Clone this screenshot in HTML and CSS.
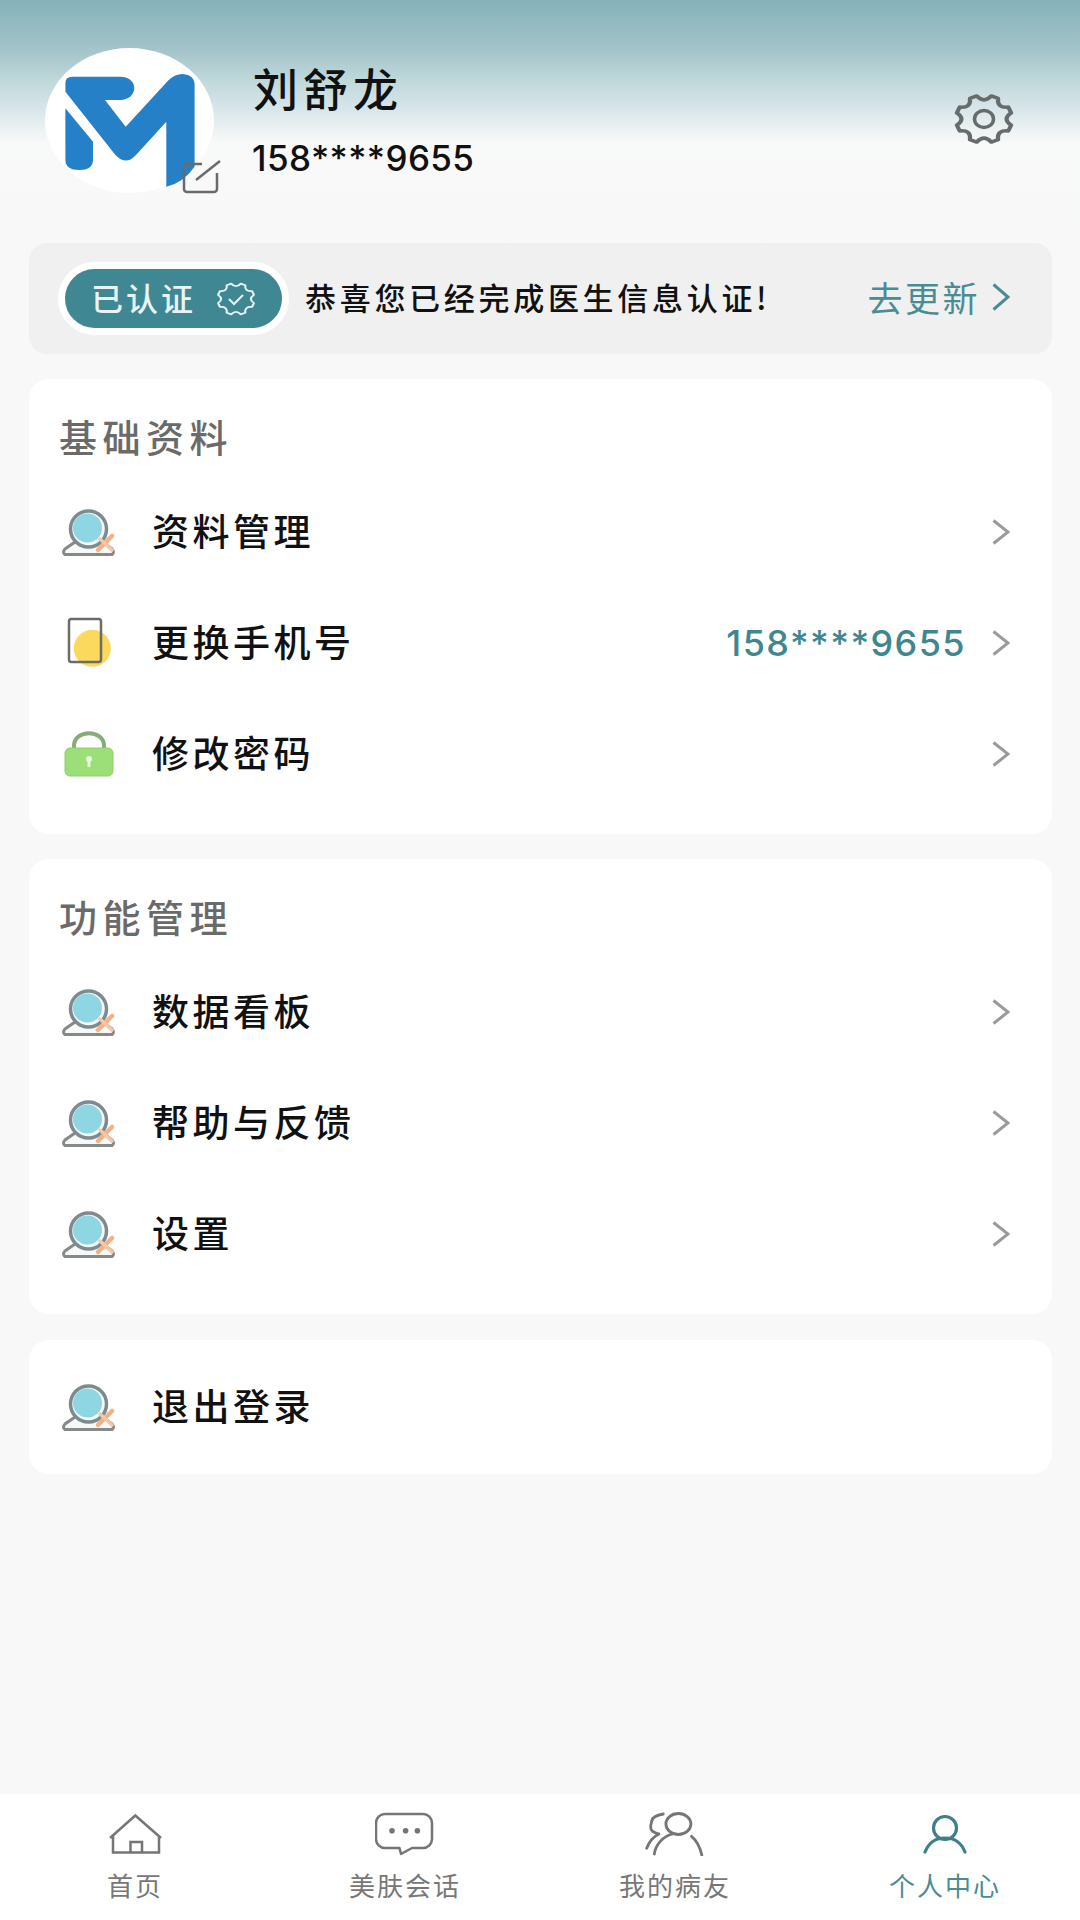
FILE: index.html
```html
<!DOCTYPE html>
<html lang="zh-CN">
<head>
<meta charset="utf-8">
<title>个人中心</title>
<link rel="stylesheet" href="styles.css">
</head>
<body>
<svg class="defs" width="0" height="0" aria-hidden="true">
  <symbol id="person" viewBox="0 0 54 54">
    <path d="M13 37 L3 44 Q0 47 3 49.500 H50 Q53 47 50 44 L42 38" fill="#f7f8f8" stroke="#85898a" stroke-width="3"/>
    <circle cx="26.500" cy="24" r="18" fill="#f2fafb" stroke="#7f8a8e" stroke-width="3.500"/>
    <circle cx="25.500" cy="23" r="14.500" fill="#8ed6e2"/>
    <path d="M36 45 L50 31" stroke="#f3b184" stroke-width="4.500" stroke-linecap="round"/>
    <path d="M38 34 L50 45" stroke="#f6c8a5" stroke-width="3.500" stroke-linecap="round"/>
  </symbol>
  <symbol id="chev" viewBox="0 0 18 26">
    <path d="M1.500 1.500 L16 13 L1.500 24.500" fill="none" stroke="#9a9a9a" stroke-width="3"/>
  </symbol>
</svg>

<div class="page">
  <header class="hero">
    <div class="avatar">
      <svg class="logo" viewBox="0 0 169 145">
        <path fill="#2680c8" d="M20.400 35 Q20.400 28.700 27.300 28.700 H75.500 C83 28.700 89.300 33 89.300 40 C89.300 47 83 52 75.500 52 H60 L80.700 78.700 L123.700 32 Q130 26 137.500 26 Q149.600 27 149.600 37 V118.700 Q138 135 121.300 138.700 V73.700 L91 107 Q81 118 70.400 107 L20.400 43.700 Z"/>
        <path fill="#2680c8" d="M20.400 60.300 L48 93.700 V112 Q48 122 34.200 122 Q20.400 122 20.400 112 Z"/>
      </svg>
      <svg class="edit" viewBox="0 0 40 36">
        <path d="M20 4 H5 a3 3 0 0 0 -3 3 V29 a3 3 0 0 0 3 3 H32 a3 3 0 0 0 3 -3 V13" fill="none" stroke="#6a6a6a" stroke-width="2.500"/>
        <path d="M14 20 L38 1" stroke="#6a6a6a" stroke-width="2.500"/>
      </svg>
    </div>
    <div class="info">
      <div class="name">刘舒龙</div>
      <div class="phone">158****9655</div>
    </div>
    <svg class="gear" viewBox="0 0 60 52">
      <g transform="translate(30 26) scale(1.060 0.900)">
        <path d="M25.600 6.860 L22.950 13.250 Q12 12 13.250 22.950 L6.860 25.600 Q0 17 -6.860 25.600 L-13.250 22.950 Q-12 12 -22.950 13.250 L-25.600 6.860 Q-17 0 -25.600 -6.860 L-22.950 -13.250 Q-12 -12 -13.250 -22.950 L-6.860 -25.600 Q0 -17 6.860 -25.600 L13.250 -22.950 Q12 -12 22.950 -13.250 L25.600 -6.860 Q17 0 25.600 6.860Z" fill="none" stroke="#666b6c" stroke-width="4" stroke-linejoin="round"/>
      </g>
      <ellipse cx="30" cy="26" rx="9.500" ry="8.500" fill="none" stroke="#666b6c" stroke-width="3.500"/>
    </svg>
  </header>

  <main class="content">
    <section class="notice">
      <div class="pill">
        <span class="pill-text">已认证</span>
        <svg class="pill-icon" viewBox="0 0 40 34">
          <g transform="translate(20 17) scale(0.700 0.600)">
            <path d="M25.600 6.860 L22.950 13.250 Q12 12 13.250 22.950 L6.860 25.600 Q0 17 -6.860 25.600 L-13.250 22.950 Q-12 12 -22.950 13.250 L-25.600 6.860 Q-17 0 -25.600 -6.860 L-22.950 -13.250 Q-12 -12 -13.250 -22.950 L-6.860 -25.600 Q0 -17 6.860 -25.600 L13.250 -22.950 Q12 -12 22.950 -13.250 L25.600 -6.860 Q17 0 25.600 6.860Z" fill="none" stroke="#e8f4f4" stroke-width="3" stroke-linejoin="round"/>
          </g>
          <path d="M13 17 L18 22 L27 13" fill="none" stroke="#e8f4f4" stroke-width="2"/>
        </svg>
      </div>
      <p class="notice-text">恭喜您已经完成医生信息认证!</p>
      <a class="update">去更新
        <svg class="update-chev" viewBox="0 0 18 28"><path d="M1.500 1.500 L16 14 L1.500 26.500" fill="none" stroke="#4a8c94" stroke-width="3"/></svg>
      </a>
    </section>

    <section class="card">
      <h2 class="card-title">基础资料</h2>
      <div class="row">
        <svg class="row-icon"><use href="#person"/></svg>
        <span class="row-label">资料管理</span>
        <svg class="chev"><use href="#chev"/></svg>
      </div>
      <div class="row">
        <svg class="row-icon" viewBox="0 0 54 54">
          <rect x="7" y="3" width="32" height="43" rx="2" fill="#fff"/>
          <circle cx="30.300" cy="32.300" r="18.500" fill="#fbd95c"/>
          <rect x="7" y="3" width="32" height="43" rx="2.500" fill="none" stroke="#6b6b68" stroke-width="2.500"/>
        </svg>
        <span class="row-label">更换手机号</span>
        <span class="row-value">158****9655</span>
        <svg class="chev"><use href="#chev"/></svg>
      </div>
      <div class="row">
        <svg class="row-icon" viewBox="0 0 54 54">
          <path d="M12 24 V19 C12 2 42 2 42 19 V24" fill="none" stroke="#86ad78" stroke-width="4"/>
          <rect x="3" y="21" width="48" height="28" rx="5" fill="#9cdf79" stroke="#8bd068" stroke-width="1"/>
          <circle cx="27" cy="32" r="3" fill="#e6f7dc"/>
          <path d="M27 33 V40" stroke="#e6f7dc" stroke-width="3"/>
        </svg>
        <span class="row-label">修改密码</span>
        <svg class="chev"><use href="#chev"/></svg>
      </div>
    </section>

    <section class="card">
      <h2 class="card-title">功能管理</h2>
      <div class="row">
        <svg class="row-icon"><use href="#person"/></svg>
        <span class="row-label">数据看板</span>
        <svg class="chev"><use href="#chev"/></svg>
      </div>
      <div class="row">
        <svg class="row-icon"><use href="#person"/></svg>
        <span class="row-label">帮助与反馈</span>
        <svg class="chev"><use href="#chev"/></svg>
      </div>
      <div class="row">
        <svg class="row-icon"><use href="#person"/></svg>
        <span class="row-label">设置</span>
        <svg class="chev"><use href="#chev"/></svg>
      </div>
    </section>

    <section class="card card-single">
      <div class="row">
        <svg class="row-icon"><use href="#person"/></svg>
        <span class="row-label">退出登录</span>
      </div>
    </section>
  </main>

  <nav class="tabbar">
    <div class="tab">
      <svg class="tab-icon" viewBox="0 0 60 44">
        <path d="M5 26 L30.300 3.500 L56 26 M8 24 V40.500 H54 V24 M25.500 40.500 V30 H37 V40.500" fill="none" stroke="#757575" stroke-width="2.500"/>
      </svg>
      <span class="tab-label">首页</span>
    </div>
    <div class="tab">
      <svg class="tab-icon" viewBox="0 0 60 44">
        <path d="M10 2 H48 a9 9 0 0 1 9 9 V27 a9 9 0 0 1 -9 9 H37 L26 42 L24.500 36 H10 a9 9 0 0 1 -9 -9 V11 a9 9 0 0 1 9 -9Z" fill="none" stroke="#757575" stroke-width="2.500" stroke-linejoin="round"/>
        <circle cx="17" cy="18.700" r="2.800" fill="#757575"/>
        <circle cx="30.600" cy="18.700" r="2.800" fill="#757575"/>
        <circle cx="42.400" cy="18.700" r="2.800" fill="#757575"/>
      </svg>
      <span class="tab-label">美肤会话</span>
    </div>
    <div class="tab">
      <svg class="tab-icon" viewBox="0 0 60 44">
        <g fill="none" stroke="#757575" stroke-width="2.800" stroke-linecap="round">
          <ellipse cx="33.400" cy="12" rx="12.500" ry="10.500"/>
          <path d="M9.300 42 C10.500 33 18 24 27.600 22"/>
          <path d="M46.500 24.300 C51 28 55 35 56.800 43"/>
          <path d="M18.300 2 C12 3 7.500 5 6.900 8.700 C6 12 5 14 5.900 17 C7 20 10 21 13.800 22"/>
          <path d="M1.700 36.300 C4 30 8 25 13.800 22"/>
        </g>
      </svg>
      <span class="tab-label">我的病友</span>
    </div>
    <div class="tab tab-active">
      <svg class="tab-icon" viewBox="0 0 60 44">
        <g fill="none" stroke="#3f8088" stroke-width="3.200" stroke-linecap="round">
          <circle cx="30" cy="16" r="11.500"/>
          <path d="M10 40 C14 30 22 26 30 26 C38 26 46 30 50 40"/>
        </g>
      </svg>
      <span class="tab-label">个人中心</span>
    </div>
  </nav>
</div>
</body>
</html>
```

FILE: styles.css
```css
* { box-sizing: border-box; }
html, body { margin: 0; padding: 0; }
body {
  width: 1080px;
  height: 1920px;
  background: #f8f8f8;
  font-family: "Noto Sans CJK SC", "Noto Sans", sans-serif;
  color: #111;
  overflow: hidden;
}
.defs { position: absolute; }
.page {
  width: 1080px;
  height: 1920px;
  display: flex;
  flex-direction: column;
}
.hero {
  height: 243px;
  padding: 48px 66px 50px 45px;
  display: flex;
  align-items: center;
  background: linear-gradient(180deg, #86b1ba 0, #a3c4ca 50px, #c0d8da 80px, #d8e6ea 110px, #f0f4f4 133px, #f8f9f9 143px, #f8f8f8 243px);
}
.avatar {
  position: relative;
  width: 169px;
  height: 145px;
  border-radius: 50%;
  background: #fff;
  flex: none;
}
.logo { display: block; width: 169px; height: 145px; filter: blur(0.4px); }
.edit { position: absolute; left: 137px; top: 112px; width: 40px; height: 36px; }
.info {
  margin-left: 39px;
  flex: 1;
  display: flex;
  flex-direction: column;
  gap: 22px;
  padding-bottom: 2px;
}
.name {
  font-size: 45px;
  line-height: 54px;
  font-weight: 500;
  letter-spacing: 5px;
  color: #111;
}
.phone {
  font-family: Inter, "Noto Sans", sans-serif;
  font-size: 35px;
  line-height: 42px;
  font-weight: 500;
  letter-spacing: 0.4px;
  color: #111;
  margin-left: -1px;
}
.gear { width: 60px; height: 52px; flex: none; margin-bottom: 4px; filter: blur(0.3px); }
.content {
  flex: 1;
  padding: 0 28px 0 29px;
  display: flex;
  flex-direction: column;
  gap: 25.200px;
}
.notice {
  height: 111px;
  background: #f0f0f0;
  border-radius: 18px;
  display: flex;
  align-items: center;
  padding: 0 42px 0 29px;
}
.pill {
  width: 231px;
  height: 73px;
  background: #3f8793;
  border: 7px solid #fff;
  border-radius: 37px;
  display: flex;
  align-items: center;
  padding-left: 26px;
  flex: none;
}
.pill-text {
  font-size: 32px;
  line-height: 40px;
  letter-spacing: 3px;
  font-weight: 500;
  color: #e8f4f4;
  padding-bottom: 4px;
  height: 44px;
}
.pill-icon { width: 40px; height: 34px; margin-left: 20px; }
.notice-text {
  margin: 0 0 0 16px;
  flex: 1;
  font-size: 31px;
  line-height: 40px;
  letter-spacing: 3.700px;
  font-weight: 500;
  color: #111;
  white-space: nowrap;
  padding-bottom: 4px;
}
.update {
  display: flex;
  align-items: center;
  font-size: 35px;
  line-height: 44px;
  letter-spacing: 2.500px;
  color: #4a8c94;
  white-space: nowrap;
  padding-bottom: 4px;
}
.update-chev { width: 18px; height: 28px; margin-left: 12px; }
.card {
  background: #fff;
  border-radius: 20px;
  padding: 37px 0 25px;
}
.card-single { padding: 11.500px 0; }
.card-title {
  margin: 0 0 12px;
  padding: 0 0 0 30px;
  height: 48px;
  font-size: 38px;
  line-height: 40px;
  font-weight: 500;
  letter-spacing: 5.500px;
  color: #6a6a6a;
}
.row {
  height: 111px;
  display: flex;
  align-items: center;
  padding: 0 42px 0 33px;
}
.row-icon { width: 54px; height: 54px; flex: none; filter: blur(0.7px); }
.row-label {
  margin-left: 36px;
  flex: 1;
  font-size: 37px;
  line-height: 48px;
  letter-spacing: 3.500px;
  font-weight: 500;
  color: #111;
  padding-bottom: 4px;
  height: 52px;
}
.row-value {
  font-family: Inter, "Noto Sans", sans-serif;
  font-size: 36px;
  font-weight: 500;
  letter-spacing: 1.400px;
  color: #3f8790;
  margin-right: 26px;
}
.chev { width: 18px; height: 26px; flex: none; }
.tabbar {
  height: 126px;
  background: #fff;
  display: grid;
  grid-template-columns: repeat(4, 1fr);
  padding-top: 18px;
}
.tab {
  display: flex;
  flex-direction: column;
  align-items: center;
}
.tab-icon { width: 60px; height: 44px; display: block; }
.tab-label {
  margin-top: 14px;
  font-size: 26px;
  line-height: 30px;
  letter-spacing: 2px;
  color: #777;
}
.tab-active .tab-label { color: #4a8c94; }
```
